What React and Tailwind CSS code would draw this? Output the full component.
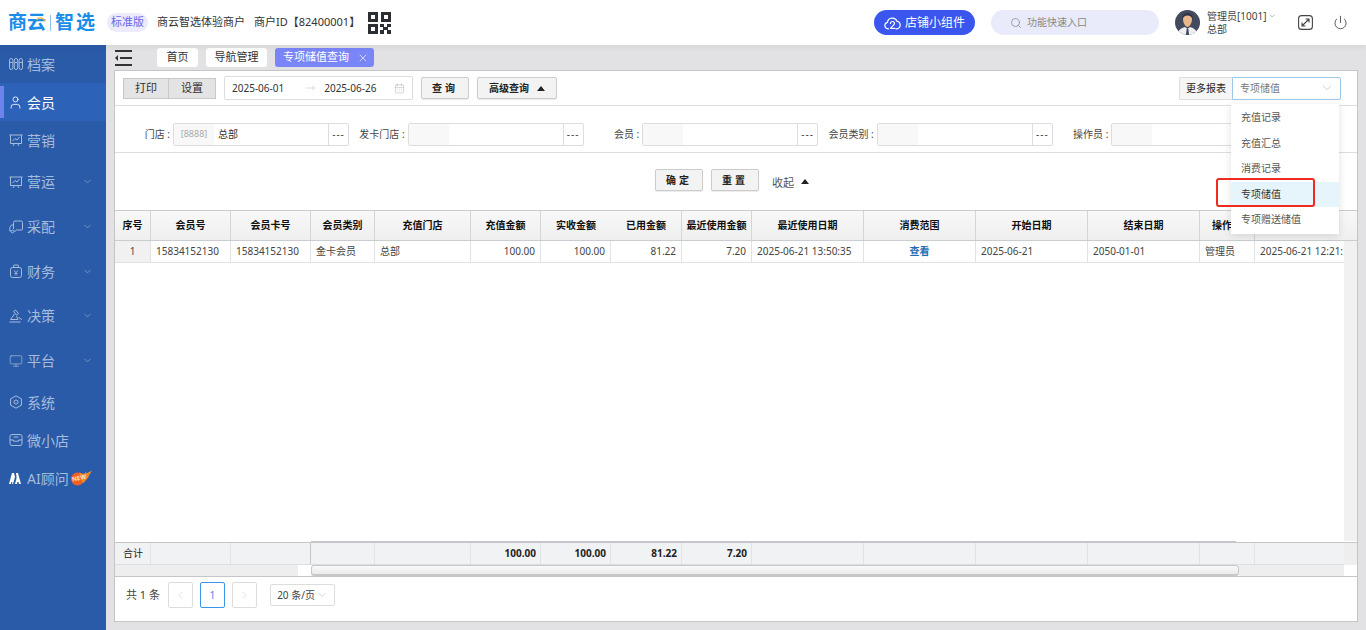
import React from "react";
import {
  Search,
  ChevronDown,
  ChevronLeft,
  ChevronRight,
  CalendarDays,
  X,
  MoveRight,
  User,
  Monitor,
  Power,
} from "lucide-react";

const font = "font-['Noto_Sans','Noto_Sans_CJK_SC',sans-serif]";
const grid =
  "grid grid-cols-[36px_80px_80px_64px_96px_70px_70px_71px_70px_112px_112px_112px_112px_55px_89px]";

function Glyph({ children }) {
  return (
    <svg width="14" height="14" viewBox="0 0 14 14" fill="none" stroke="currentColor" strokeWidth="1" className="shrink-0">
      {children}
    </svg>
  );
}

const ArchiveIcon = () => (
  <Glyph>
    <rect x="0.5" y="1.5" width="3.4" height="11" rx="1.7" />
    <rect x="5.3" y="1.5" width="3.4" height="11" rx="1.7" />
    <rect x="10.1" y="1.5" width="3.4" height="11" rx="1.7" />
    <path d="M1 5.5h2.4M5.8 5.5h2.4M10.6 5.5h2.4" />
  </Glyph>
);
const BoardIcon = () => (
  <Glyph>
    <path d="M0.5 2h13M1.5 2v8.5h11V2M4 13l1.5-2.5M10 13l-1.5-2.5" />
    <path d="M3.5 8l2.5-2.5 2 1.5 2.5-3" />
  </Glyph>
);
const TruckIcon = () => (
  <Glyph>
    <path d="M4.5 9V2.5a1.5 1.5 0 0 1 1.5-1.5h6a1.5 1.5 0 0 1 1.5 1.5V9a1 1 0 0 1-1 1H7" />
    <path d="M4.5 5H2.5L0.8 7.5V11h1.4M5 11h2" />
    <circle cx="3.5" cy="11.5" r="1.3" />
  </Glyph>
);
const BagIcon = () => (
  <Glyph>
    <rect x="1.5" y="3.5" width="11" height="10" rx="2" />
    <path d="M4.5 3.5V2a1 1 0 0 1 1-1h3a1 1 0 0 1 1 1v1.5" />
    <path d="M5 6.5l2 2 2-2M7 8.5v3M5.5 9.5h3" />
  </Glyph>
);
const GavelIcon = () => (
  <Glyph>
    <path d="M4.5 2.5L6.5 1l3 3.5-2 1.5zM5.5 5L1.5 10.5h7.5l-1.5-3.5M9.5 8.5l3.5 2" />
    <path d="M0.5 13h11" />
  </Glyph>
);
const SystemIcon = () => (
  <Glyph>
    <path d="M7 0.8l5.4 3v6.4L7 13.2l-5.4-3V3.8z" strokeLinejoin="round" />
    <circle cx="7" cy="7" r="2" />
  </Glyph>
);
const ShopIcon = () => (
  <Glyph>
    <rect x="1" y="1.5" width="12" height="11" rx="2" />
    <path d="M1 7h3.5v1.2h5V7H13M4.5 4h5" />
  </Glyph>
);
const UserIcon = () => <User size={15} strokeWidth={1.3} className="-ml-[1px] shrink-0" />;
const ScreenIcon = () => <Monitor size={14} strokeWidth={1.2} className="shrink-0" />;

const menus = [
  { name: "档案", icon: ArchiveIcon, h: "h-[38px]" },
  { name: "会员", icon: UserIcon, h: "h-[38px]", active: true },
  { name: "营销", icon: BoardIcon, h: "h-[38px]" },
  { name: "营运", icon: BoardIcon, h: "h-[45px]", arrow: true },
  { name: "采配", icon: TruckIcon, h: "h-[45px]", arrow: true },
  { name: "财务", icon: BagIcon, h: "h-[44px]", arrow: true },
  { name: "决策", icon: GavelIcon, h: "h-[45px]", arrow: true },
  { name: "平台", icon: ScreenIcon, h: "h-[45px]", arrow: true },
  { name: "系统", icon: SystemIcon, h: "h-[38px]" },
  { name: "微小店", icon: ShopIcon, h: "h-[38px]" },
];

const headers = [
  "序号",
  "会员号",
  "会员卡号",
  "会员类别",
  "充值门店",
  "充值金额",
  "实收金额",
  "已用金额",
  "最近使用金额",
  "最近使用日期",
  "消费范围",
  "开始日期",
  "结束日期",
  "操作员",
  "操作日期",
];

const row = [
  { t: "1", c: "justify-center bg-[#f1f1f1]" },
  { t: "15834152130" },
  { t: "15834152130" },
  { t: "金卡会员" },
  { t: "总部" },
  { t: "100.00", c: "justify-end" },
  { t: "100.00", c: "justify-end" },
  { t: "81.22", c: "justify-end" },
  { t: "7.20", c: "justify-end" },
  { t: "2025-06-21 13:50:35" },
  { t: "查看", c: "justify-center text-[#1f6fb5] font-bold" },
  { t: "2025-06-21" },
  { t: "2050-01-01" },
  { t: "管理员" },
  { t: "2025-06-21 12:21:", c: "overflow-hidden whitespace-nowrap border-r-0" },
];

const totals = ["合计", "", "", "", "", "100.00", "100.00", "81.22", "7.20", "", "", "", "", "", ""];

const filters = ["门店", "发卡门店", "会员", "会员类别", "操作员"];
const reports = ["充值记录", "充值汇总", "消费记录", "专项储值", "专项赠送储值"];

function QrCode() {
  return (
    <svg width="23" height="22" viewBox="0 0 23 22" fill="#2b2f33">
      <path d="M0 0h10v10H0zM3 3v4h4V3zM13 0h10v10H13zM16 3v4h4V3zM0 12h10v10H0zM3 15v4h4v-4z" fillRule="evenodd" />
      <path d="M12 12h4v3h3v-3h4v3h-3v3h3v4h-4v-4h-3v4h-4v-4h3v-3h-3z" />
    </svg>
  );
}

function Avatar() {
  return (
    <svg width="25" height="25" viewBox="0 0 25 25" className="rounded-full">
      <rect width="25" height="25" fill="#434a5e" />
      <path d="M7 10c0-5 3-7 5.500-7S18 5 18 10c-1-2-2-3.500-5.500-3.500S8 8 7 10z" fill="#2e3342" />
      <path d="M8 9c0-2 2-3.500 4.500-3.500S17 7 17 9c0 4-2.500 8-4.500 8S8 13 8 9z" fill="#e8b78d" />
      <path d="M3 25c0-5 3-7 7-8l2.500 2 2.500-2c4 1 7 3 7 8z" fill="#eceef2" />
      <path d="M11.700 19h1.600l.8 6h-3.200z" fill="#39435a" />
    </svg>
  );
}

function CloudIcon() {
  return (
    <svg width="17" height="14" viewBox="0 0 17 14" fill="none" stroke="#fff" strokeWidth="1.2" strokeLinecap="round" strokeLinejoin="round">
      <path d="M4.500 12.800H4a3.300 3.300 0 0 1-.6-6.500A5 5 0 0 1 13 5.300a3.800 3.800 0 0 1 0 7.500h-1" />
      <path d="M6.500 7.500a2 2 0 0 1 4 0c0 1.500-2.500 2.500-4 4.800h4.500" />
    </svg>
  );
}

function ExpandIcon() {
  return (
    <svg width="15" height="15" viewBox="0 0 15 15" fill="none" stroke="#444" strokeWidth="1.1" className="ml-[21px] shrink-0">
      <rect x="0.6" y="0.6" width="13.800" height="13.800" rx="3" />
      <path d="M4 11l7-7M7.500 4H11v3.500M4 7.500V11h3.500" />
    </svg>
  );
}

function AiLogo() {
  return (
    <svg width="12" height="11" viewBox="0 0 12 11" fill="#fff">
      <path d="M0 11 3 0h2l1 4-2 7H3l.4-2H2.200L2 11zM7 0h2l3 11h-2l-.4-2H8.400L8 11H6l1.600-6z" />
    </svg>
  );
}

function NewBadge() {
  return (
    <span className="relative ml-px flex h-4 w-[23px] items-center">
      <svg width="23" height="16" viewBox="0 0 23 16" className="absolute left-0 top-0">
        <circle cx="7.500" cy="9" r="6.500" fill="#f2601f" />
        <path d="M9 2.600 14 4l2-2 .5 1.600L22 .5l-3 5-1 .5 1 .5-6 7z" fill="#f58a1f" />
      </svg>
      <span className="relative ml-[2px] -rotate-12 text-[6px] font-bold leading-none text-[#ffe3c8]">NEW</span>
    </span>
  );
}

function Sidebar() {
  return (
    <div className="w-[106px] shrink-0 bg-[#2a5ba8]">
      {menus.map((m) => (
        <div
          key={m.name}
          className={`relative flex items-center pl-[9px] pr-3 text-[14px] ${m.h} ${
            m.active ? "bg-[#2c63b8] text-white" : "text-[#a6bcdd]"
          }`}
        >
          {m.active && <span className="absolute left-0 top-[3px] h-[32px] w-[4px] bg-[#6d84ef]" />}
          <m.icon />
          <span className="ml-[4px]">{m.name}</span>
          {m.arrow && <ChevronDown size={11} strokeWidth={1.5} className="ml-auto mr-[1px] text-[#8faad4]" />}
        </div>
      ))}
      <div className="flex h-[38px] items-center pl-[9px] text-[14px] text-[#a6bcdd]">
        <AiLogo />
        <span className="ml-[6px]">AI顾问</span>
        <NewBadge />
      </div>
    </div>
  );
}

function Header() {
  return (
    <div className="relative z-10 flex h-[45px] shrink-0 items-center bg-white pl-2 pr-[18px] text-[11px] text-[#333] shadow-[0_2px_6px_rgba(0,0,0,0.06)]">
      <div className="flex items-center text-[19px] font-bold leading-none text-[#1a8de9]">
        <span className="relative">
          商云
          <svg width="10" height="6" viewBox="0 0 10 6" className="absolute left-[28px] top-[3px]" fill="none" stroke="#f0b43c" strokeWidth="1.4">
            <path d="M0.500 4C3 1 6 1 9.500 5" />
          </svg>
        </span>
        <span className="mx-[4px] h-4 w-px bg-[#8cc4ee]" />
        <span className="tracking-[2px]">智选</span>
      </div>
      <span className="ml-[10px] rounded-full bg-[#ebebfb] px-[4px] py-[1px] text-[11px] text-[#6a66e8]">标准版</span>
      <span className="ml-[9px]">商云智选体验商户</span>
      <span className="ml-[9px]">商户ID【82400001】</span>
      <span className="ml-2">
        <QrCode />
      </span>
      <button className="ml-auto flex h-[25px] w-[101px] items-center justify-center gap-1 rounded-full bg-[#3a56ee] text-[12px] text-white">
        <CloudIcon />
        店铺小组件
      </button>
      <div className="ml-4 flex h-[25px] w-[168px] items-center rounded-full bg-[#e9ebfa] pl-[19px] text-[10px] text-[#888]">
        <Search size={12} strokeWidth={1.5} className="mr-[5px]" />
        功能快速入口
      </div>
      <div className="ml-4">
        <Avatar />
      </div>
      <div className="ml-[7px] w-[70px] whitespace-nowrap text-[10px] leading-[13px] text-[#444]">
        <div className="flex items-center">
          管理员[1001]
          <ChevronDown size={10} className="ml-[2px] text-[#999]" />
        </div>
        <div>总部</div>
      </div>
      <ExpandIcon />
      <Power size={15} strokeWidth={1.5} className="ml-[20px] text-[#555]" />
    </div>
  );
}

function Tabs() {
  return (
    <div className="flex h-[25px] shrink-0 items-center text-[11px]">
      <div className="ml-px flex w-[17px] flex-col gap-[5px]">
        <span className="h-[2px] bg-[#333]" />
        <span className="relative ml-[5px] h-[2px] bg-[#333]">
          <span className="absolute -left-[5px] -top-[2px] h-0 w-0 border-y-[3px] border-r-[3px] border-y-transparent border-r-[#333]" />
        </span>
        <span className="h-[2px] bg-[#333]" />
      </div>
      <span className="ml-[25px] flex h-[19px] w-[41px] items-center justify-center rounded-[3px] bg-white text-[#333]">首页</span>
      <span className="ml-2 flex h-[19px] w-[61px] items-center justify-center rounded-[3px] bg-white text-[#333]">导航管理</span>
      <span className="ml-2 flex h-[19px] w-[99px] items-center gap-2 rounded-[3px] bg-[#7a85f7] pl-2 text-white">
        专项储值查询
        <X size={12} strokeWidth={1.3} />
      </span>
    </div>
  );
}

function GrayButton({ children, className = "" }) {
  return (
    <button
      className={`flex h-[22px] items-center justify-center rounded-[2px] border border-[#ccc] bg-[#f3f3f3] text-[10px] font-bold text-[#222] shadow-[0_1px_1px_rgba(0,0,0,0.08)] ${className}`}
    >
      {children}
    </button>
  );
}

function Triangle() {
  return <span className="inline-block h-0 w-0 border-x-[4px] border-b-[5px] border-x-transparent border-b-[#222]" />;
}

function Toolbar() {
  return (
    <div className="flex h-[35px] shrink-0 items-center border-b border-[#ddd] pl-2 pr-4 text-[10px] text-[#333]">
      <div className="flex h-[21px] w-[93px] border border-[#c8c8c8] bg-[#e4e4e4] text-[11px]">
        <span className="flex w-[45px] items-center justify-center border-r border-[#c8c8c8]">打印</span>
        <span className="flex flex-1 items-center justify-center">设置</span>
      </div>
      <div className="ml-2 flex h-[24px] w-[189px] items-center rounded-[2px] border border-[#ddd] pl-[7px] pr-[7px]">
        <span>2025-06-01</span>
        <MoveRight size={10} strokeWidth={1} className="ml-[21px] text-[#aaa]" />
        <span className="ml-[9px]">2025-06-26</span>
        <CalendarDays size={11} strokeWidth={1} className="ml-auto text-[#aaa]" />
      </div>
      <GrayButton className="ml-2 w-[48px] tracking-[3px]">查询</GrayButton>
      <GrayButton className="ml-2 w-[80px] gap-2">
        高级查询
        <Triangle />
      </GrayButton>
      <div className="ml-auto flex h-[23px]">
        <span className="flex w-[53px] items-center justify-center rounded-l-[2px] border border-r-0 border-[#ddd] bg-[#f6f6f6] text-[10px] text-[#222]">
          更多报表
        </span>
        <span className="flex w-[109px] items-center rounded-r-[2px] border border-[#9cc8ea] pl-[7px] pr-[6px] text-[10px] text-[#777]">
          专项储值
          <ChevronDown size={14} strokeWidth={1} className="ml-auto text-[#aaa]" />
        </span>
      </div>
    </div>
  );
}

function Filters() {
  return (
    <div className="grid h-[47px] shrink-0 grid-cols-[repeat(5,234.6px)] items-center border-b border-[#ddd] pt-[10px] text-[10px] text-[#444]">
      {filters.map((f, i) => (
        <div key={f} className="flex items-center">
          <span className="w-[58px] shrink-0 pr-[3px] text-right whitespace-nowrap">{f} :</span>
          <div className="flex h-[23px] w-[176px] shrink-0 overflow-hidden rounded-[2px] border border-[#ddd]">
            <span className="flex w-[40px] items-center justify-center bg-[#f8f8f8] text-[9px] text-[#aaa]">
              {i === 0 && "[8888]"}
            </span>
            <span className="flex flex-1 items-center pl-1 text-[#333]">{i === 0 && "总部"}</span>
            <span className="flex w-[20px] items-center justify-center border-l border-[#ddd] tracking-[1px]">---</span>
          </div>
        </div>
      ))}
    </div>
  );
}

function Actions() {
  return (
    <div className="flex h-[57px] shrink-0 items-center pl-[540px] pb-[3px] text-[11px] text-[#555]">
      <GrayButton className="w-[48px] tracking-[3px]">确定</GrayButton>
      <GrayButton className="ml-2 w-[48px] tracking-[3px]">重置</GrayButton>
      <span className="ml-[13px] pt-[6px]">收起</span>
      <span className="ml-[7px] flex pt-[3px]">
        <Triangle />
      </span>
    </div>
  );
}

function DataTable() {
  return (
    <div className="flex min-h-0 flex-1 flex-col">
      <div className={`${grid} h-[31px] shrink-0 border-y border-[#c9ccd0] bg-gradient-to-b from-[#f8f8f8] to-[#efefef] text-[10px] font-bold text-[#111]`}>
        {headers.map((h, i) => (
          <div
            key={h}
            className={`flex items-center justify-center overflow-hidden whitespace-nowrap border-[#d3d5d8] ${
              i === 6 || i === 14 ? "" : "border-r"
            }`}
          >
            {h}
          </div>
        ))}
      </div>
      <div className="flex min-h-0 flex-1">
        <div className="w-[1229px]">
          <div className={`${grid} h-[22px] border-b border-[#e0e3e6] text-[10px] text-[#444]`}>
            {row.map((c, i) => (
              <div key={i} className={`flex items-center border-r border-[#e0e3e6] px-[5px] ${c.c || ""}`}>
                {c.t}
              </div>
            ))}
          </div>
        </div>
        <div className="w-[13px] bg-[#f1f1f1]" />
      </div>
      <div className="ml-[196px] h-px w-[925px] shrink-0 bg-[#c4c6c9]" />
      <div className="flex h-[23px] shrink-0 border-t border-[#c4c6c9] bg-[#f1f2f3]">
        <div className={`${grid} w-[1229px] border-b border-[#dcdfe2] text-[10px] font-bold text-[#222]`}>
          {totals.map((t, i) => (
            <div
              key={i}
              className={`flex items-center border-r px-1 ${i === 2 ? "border-[#c4c6c9]" : "border-[#e0e3e6]"} ${
                i === 14 ? "border-r-0" : ""
              } ${i === 0 ? "pl-2 font-normal" : "justify-end"}`}
            >
              {t}
            </div>
          ))}
        </div>
        <div className="w-[13px] bg-[#eeeeee]" />
      </div>
      <div className="flex h-[12px] shrink-0 border-b border-[#c4c6c9]">
        <div className="w-[183px] bg-[#eeeeee]" />
        <div className="w-[13px] bg-white" />
        <div className="w-[928px] rounded-[3px] border border-b-2 border-[#c8c8c8] bg-gradient-to-b from-[#fafafa] to-[#ebebeb]" />
        <div className="w-[105px] bg-[#eeeeee]" />
        <div className="w-[13px] bg-white" />
      </div>
    </div>
  );
}

function Pager() {
  return (
    <div className="flex h-[44px] shrink-0 items-center pb-[8px] pl-[11px] text-[11px] text-[#444]">
      <span>共 1 条</span>
      <span className="ml-[8px] flex h-[26px] w-[25px] items-center justify-center rounded-[2px] border border-[#ddd] text-[#ccc]">
        <ChevronLeft size={13} strokeWidth={1} />
      </span>
      <span className="ml-[7px] flex h-[26px] w-[25px] items-center justify-center rounded-[2px] border border-[#3b96ea] text-[#5a8cf0]">1</span>
      <span className="ml-[7px] flex h-[26px] w-[25px] items-center justify-center rounded-[2px] border border-[#ddd] text-[#ccc]">
        <ChevronRight size={13} strokeWidth={1} />
      </span>
      <span className="ml-[13px] flex h-[22px] w-[65px] items-center justify-center rounded-[2px] border border-[#ddd] text-[10px]">
        20 条/页
        <ChevronDown size={12} strokeWidth={1} className="ml-[1px] text-[#aaa]" />
      </span>
    </div>
  );
}

function ReportMenu() {
  return (
    <div className="absolute left-[1116px] top-[33px] z-20 w-[108px] bg-white py-[1px] text-[10px] text-[#555] shadow-[0_2px_8px_rgba(0,0,0,0.12)]">
      {reports.map((r, i) => (
        <div
          key={r}
          className={`flex h-[25.5px] items-center pl-[10px] ${i === 3 ? "bg-[#e6f4fc] text-[#333]" : ""}`}
        >
          {r}
        </div>
      ))}
    </div>
  );
}

export default function App() {
  return (
    <div className={`flex h-screen w-full flex-col overflow-hidden bg-[#e2e2e4] ${font}`}>
      <Header />
      <div className="flex min-h-0 flex-1">
        <Sidebar />
        <div className="flex min-w-0 flex-1 flex-col pb-2 pl-2 pr-2">
          <Tabs />
          <div className="relative flex min-h-0 flex-1 flex-col border border-[#c5c5c5] bg-white">
            <Toolbar />
            <Filters />
            <Actions />
            <DataTable />
            <Pager />
            <ReportMenu />
            <div className="absolute left-[1101px] top-[107px] z-30 h-[29px] w-[99px] rounded-[3px] border-2 border-[#f02a1e]" />
          </div>
        </div>
      </div>
    </div>
  );
}
